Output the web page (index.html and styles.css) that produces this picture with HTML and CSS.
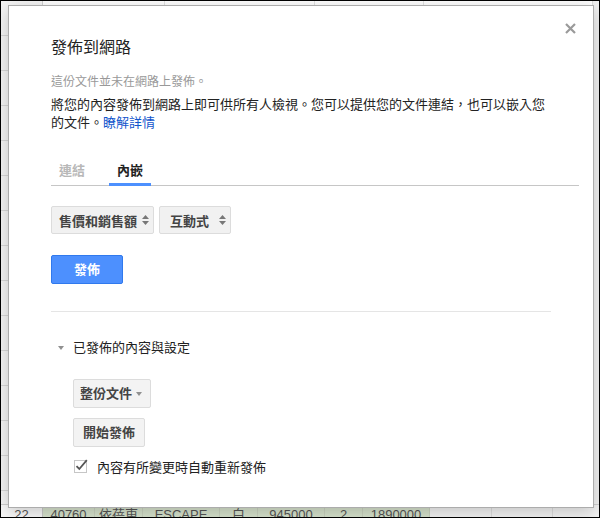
FILE: index.html
```html
<!DOCTYPE html>
<html lang="zh-Hant">
<head>
<meta charset="utf-8">
<title>發佈到網路</title>
<link rel="stylesheet" href="styles.css">
</head>
<body>
<div class="screen">
  <div class="sheet">
    <div class="sheet-body">
      <div class="sheet-head"></div>
      <div class="sheet-cells"></div>
      <div class="sheet-scroll"></div>
    </div>
    <div class="sheet-row">
      <div class="cell rownum">22</div>
      <div class="cell green c-a">40760</div>
      <div class="cell green c-b">依蓓東</div>
      <div class="cell green c-c">ESCAPE</div>
      <div class="cell green c-d">白</div>
      <div class="cell green c-e">945000</div>
      <div class="cell green c-f">2</div>
      <div class="cell green c-g">1890000</div>
      <div class="cell c-h"></div>
      <div class="cell c-i"></div>
      <div class="cell c-j"></div>
    </div>
  </div>

  <div class="dialog">
    <button class="close" aria-label="關閉">
      <svg width="11" height="11" viewBox="0 0 11 11"><path d="M1 1L10 10M10 1L1 10" stroke="#9a9a9a" stroke-width="2.2" fill="none"/></svg>
    </button>
    <h1 class="title">發佈到網路</h1>
    <p class="status">這份文件並未在網路上發佈。</p>
    <p class="desc">將您的內容發佈到網路上即可供所有人檢視。您可以提供您的文件連結，也可以嵌入您的文件。<a class="link" href="#">瞭解詳情</a></p>

    <div class="tabs">
      <span class="tab">連結</span>
      <span class="tab active">內嵌</span>
    </div>

    <div class="selects">
      <div class="select select-sheet">售價和銷售額
        <svg class="updown" width="7" height="10" viewBox="0 0 7 10"><path d="M0 4L3.5 0L7 4Z M0 6L3.5 10L7 6Z" fill="#777"/></svg>
      </div>
      <div class="select select-mode">互動式
        <svg class="updown" width="7" height="10" viewBox="0 0 7 10"><path d="M0 4L3.5 0L7 4Z M0 6L3.5 10L7 6Z" fill="#777"/></svg>
      </div>
    </div>

    <button class="btn btn-primary">發佈</button>

    <div class="divider"></div>

    <div class="section-head"><span class="tri"></span>已發佈的內容與設定</div>

    <div class="section-body">
      <div class="btn btn-menu">整份文件<span class="caret"></span></div>
      <button class="btn btn-start">開始發佈</button>
      <label class="check">
        <svg class="checkbox" width="15" height="14" viewBox="0 0 15 14">
          <rect x="0.5" y="1.5" width="12" height="12" fill="#fff" stroke="#c6c6c6"/>
          <path d="M2.5 7.2L5.3 10L12.8 1.2" stroke="#555" stroke-width="1.8" fill="none"/>
        </svg>
        <span>內容有所變更時自動重新發佈</span>
      </label>
    </div>
  </div>
</div>
</body>
</html>
```

FILE: styles.css
```css
* { box-sizing: border-box; }
html, body { margin: 0; padding: 0; }
body {
  font-family: "Liberation Sans", "Noto Sans CJK TC", sans-serif;
  background: #fff;
  color: #222;
}

.screen {
  width: 600px;
  height: 518px;
  border: 1px solid #000;
  position: relative;
  overflow: hidden;
  background: #fff;
}

/* spreadsheet behind the dialog */
.sheet {
  display: flex;
  flex-direction: column;
  height: 524px;
}
.sheet-body {
  flex: 1;
  display: flex;
}
.sheet-head {
  width: 42px;
  background: #f5f5f5 repeating-linear-gradient(to bottom, transparent 0 34px, #d8d8d8 34px 35px);
  border-right: 1px solid #d0d0d0;
}
.sheet-cells {
  flex: 1;
  background:
    linear-gradient(to right, transparent 121px, #e2e2e2 121px 122px, transparent 122px 271px, #e2e2e2 271px 272px, transparent 272px 380px, #e2e2e2 380px 381px, transparent 381px);
}
.sheet-scroll {
  width: 7px;
  background: #f1f1f1;
  border-left: 1px solid #ddd;
}
.sheet-row {
  height: 21px;
  display: flex;
  border-top: 1px solid #cfcfcf;
  font-size: 13px;
  line-height: 20px;
  color: #555;
}
.cell {
  border-right: 1px solid #c9d2bf;
  text-align: center;
  white-space: nowrap;
  overflow: hidden;
}
.rownum { width: 42px; background: #f8f8f8; border-right: 1px solid #c8c8c8; }
.green { background: #d6e2cc; }
.c-a { width: 52px; }
.c-b { width: 48px; }
.c-c { width: 77px; }
.c-d { width: 38px; }
.c-e { width: 67px; }
.c-f { width: 38px; }
.c-g { width: 67px; }
.c-h { width: 62px; background: #f3f3f3; border-right-color: #ddd; }
.c-i { width: 61px; background: #f3f3f3; border-right-color: #ddd; }
.c-j { flex: 1; background: #f3f3f3; border-right: none; }

/* dialog */
.dialog {
  position: absolute;
  left: 7px;
  top: 4px;
  width: 586px;
  height: 503px;
  background: #fff;
  border: 1px solid #acacac;
  box-shadow: 0 4px 16px rgba(0, 0, 0, 0.2);
  padding: 32px 42px 0;
}
.close {
  position: absolute;
  right: 17px;
  top: 17px;
  width: 11px;
  height: 11px;
  padding: 0;
  border: 0;
  background: none;
  display: block;
}
.close svg { display: block; }

.title {
  margin: 0;
  font-size: 16px;
  line-height: 20px;
  font-weight: normal;
  color: #222;
}
.status {
  margin: 16px 0 0;
  font-size: 12px;
  line-height: 16px;
  color: #999;
}
.desc {
  margin: 6px 0 0;
  font-size: 13px;
  line-height: 18px;
  color: #222;
}
.link { color: #15c; text-decoration: none; }

.tabs {
  margin: 30px -28px 0 0;
  display: flex;
  gap: 16px;
  border-bottom: 1px solid #c6c6c6;
}
.tab {
  font-size: 13px;
  line-height: 18px;
  font-weight: bold;
  color: #b8b8b8;
  padding: 0 8px 3px;
  border-bottom: 3px solid transparent;
  margin-bottom: -1px;
}
.tab.active {
  color: #222;
  border-bottom-color: #4d90fe;
}

.selects {
  margin-top: 20px;
  display: flex;
  gap: 5px;
}
.select {
  height: 28px;
  display: flex;
  align-items: center;
  background: #f1f1f1;
  border: 1px solid #dcdcdc;
  border-radius: 2px;
  font-size: 13px;
  font-weight: bold;
  color: #444;
  white-space: nowrap;
}
.select-sheet { padding: 0 4px 0 7px; gap: 5px; }
.select-mode { padding: 0 4px 0 10px; gap: 10px; }
.updown { display: block; }

.btn {
  display: flex;
  align-items: center;
  justify-content: center;
  height: 29px;
  border-radius: 2px;
  font-family: inherit;
  font-size: 13px;
  font-weight: bold;
  line-height: 18px;
  background: #f3f3f3;
  border: 1px solid #dcdcdc;
  color: #444;
  padding: 0 9px;
  margin: 0;
  white-space: nowrap;
}
.btn-primary {
  margin-top: 21px;
  width: 72px;
  background: #4d90fe;
  border-color: #3079ed;
  color: #fff;
}

.divider {
  margin-top: 27px;
  height: 1px;
  background: #e5e5e5;
}

.section-head {
  margin-top: 27px;
  display: flex;
  align-items: center;
  font-size: 13px;
  line-height: 18px;
  padding-left: 7px;
  color: #222;
}
.tri {
  width: 0;
  height: 0;
  border-left: 3px solid transparent;
  border-right: 3px solid transparent;
  border-top: 4px solid #909090;
  margin-right: 9px;
}

.section-body {
  padding-left: 22px;
  display: flex;
  flex-direction: column;
  align-items: flex-start;
}
.btn-menu {
  margin-top: 22px;
  padding: 0 8px 0 6px;
  justify-content: flex-start;
  gap: 4px;
}
.caret {
  width: 0;
  height: 0;
  border-left: 3px solid transparent;
  border-right: 3px solid transparent;
  border-top: 4px solid #909090;
}
.btn-start {
  margin-top: 10px;
}

.check {
  margin-top: 12px;
  display: flex;
  align-items: flex-start;
  gap: 8px;
  font-size: 13px;
  line-height: 18px;
  color: #222;
  padding-left: 1px;
}
.checkbox { display: block; margin-top: 0; }
```
